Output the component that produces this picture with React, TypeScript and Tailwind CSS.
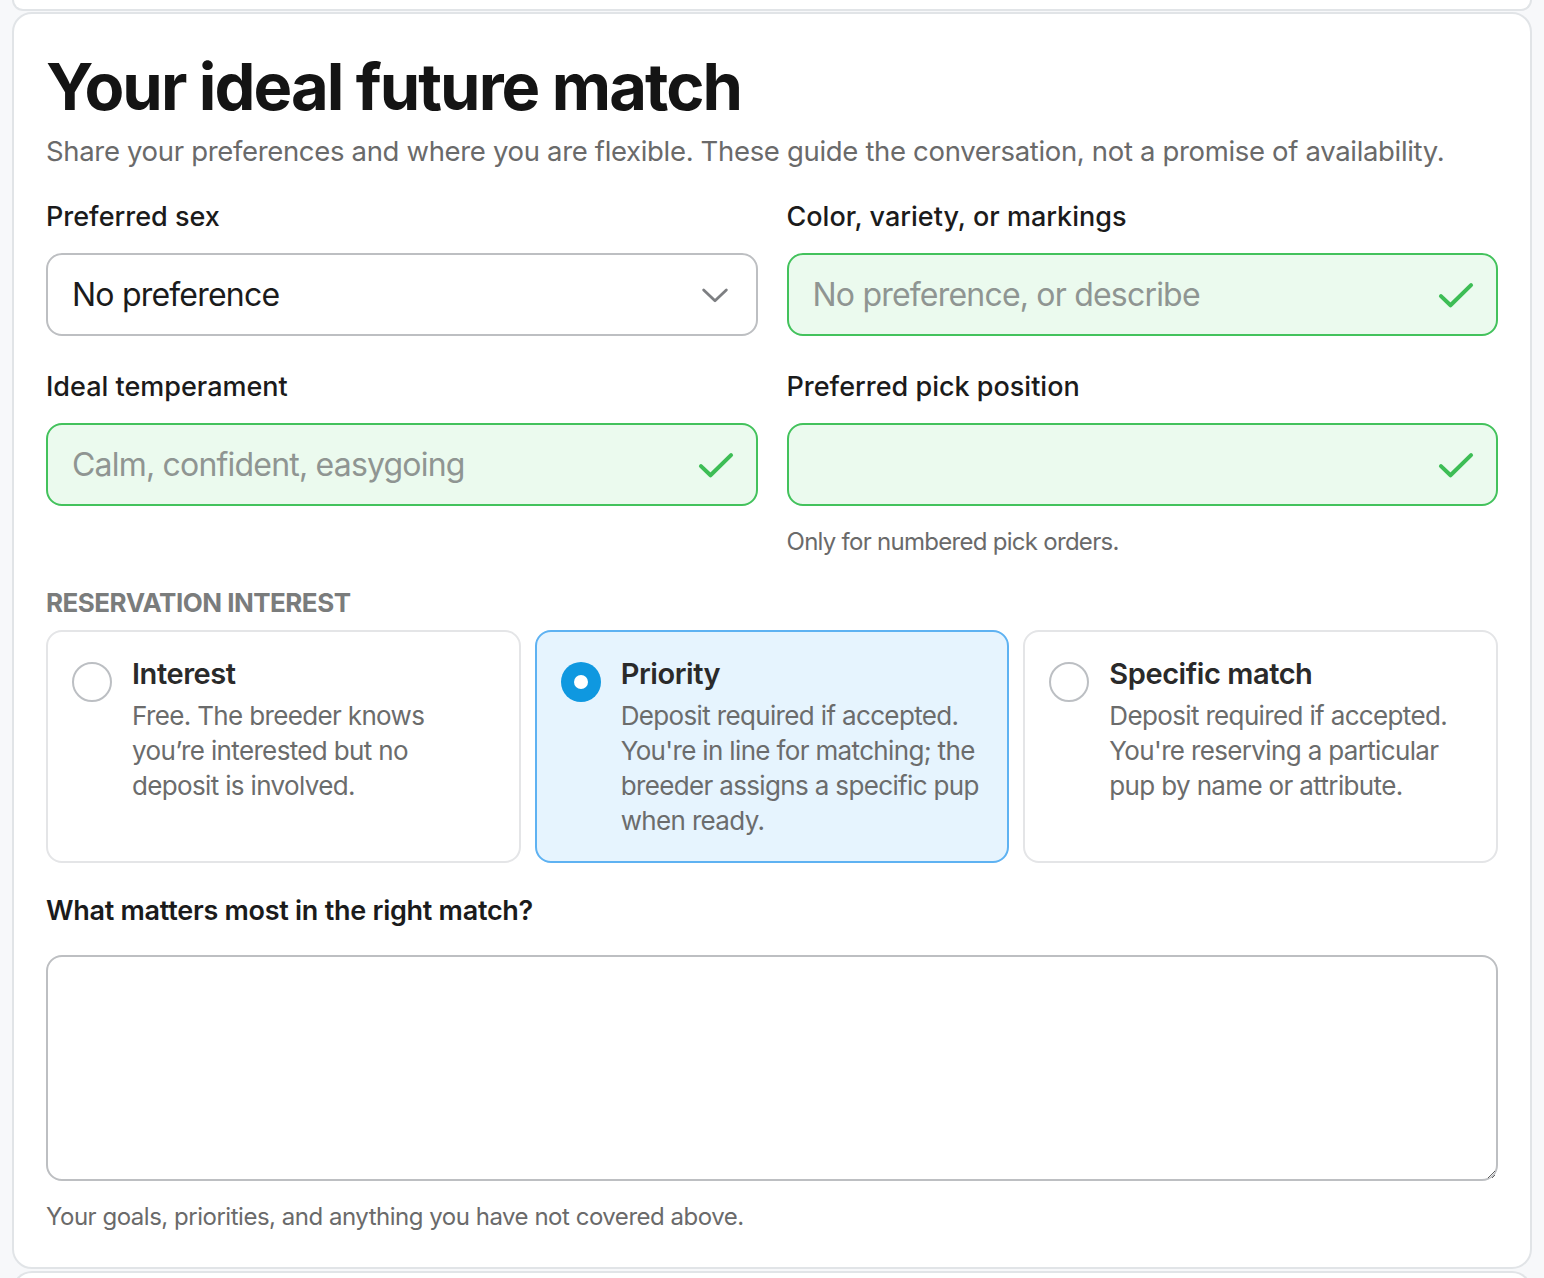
import React from "react";

const font = { fontFamily: "Inter, 'Noto Sans', sans-serif" };

function Check() {
  return (
    <svg width="44" height="44" viewBox="0 0 24 24" fill="none" stroke="#3dbd55" strokeWidth="2.2" strokeLinecap="round" strokeLinejoin="round">
      <path d="M3.8 12.6l5.2 5L20.2 6.6" />
    </svg>
  );
}

function Chevron() {
  return (
    <svg width="34" height="34" viewBox="0 0 24 24" fill="none" stroke="#7d7f82" strokeWidth="2" strokeLinecap="round" strokeLinejoin="round">
      <path d="M4 8.5l8 7.5 8-7.5" />
    </svg>
  );
}

function GreenInput({ placeholder }: { placeholder?: string }) {
  return (
    <div className="flex h-[83px] items-center justify-between rounded-[16px] border-2 border-[#43c25c] bg-[#ebfaee] pl-[24px] pr-[18px]">
      <span className="text-[32px] tracking-[-0.025em] text-[#8f9592]">{placeholder}</span>
      <Check />
    </div>
  );
}

function RadioCard({ title, desc, selected }: { title: string; desc: string; selected?: boolean }) {
  return (
    <div
      className={
        "flex h-[233px] gap-[20px] rounded-[16px] border-2 pl-[24px] pr-[28px] pt-[24px] " +
        (selected ? "border-[#5eb2f2] bg-[#e6f4fe]" : "border-[#e4e5e7] bg-white")
      }
    >
      <div className="shrink-0 pt-[6px]">
        {selected ? (
          <div className="flex h-[40px] w-[40px] items-center justify-center rounded-full bg-[#0f98e0]">
            <div className="h-[14px] w-[14px] rounded-full bg-white" />
          </div>
        ) : (
          <div className="h-[40px] w-[40px] rounded-full border-2 border-[#bcbfc3] bg-white" />
        )}
      </div>
      <div className="min-w-0 flex-1">
        <div className="text-[29px] font-semibold leading-[36px] tracking-[-0.015em] text-[#2a2a2a]">{title}</div>
        <div className="mt-[6px] text-[26px] leading-[35px] tracking-[-0.025em] text-[#6b6c6c]">{desc}</div>
      </div>
    </div>
  );
}

export default function App() {
  return (
    <div className="min-h-[1278px] bg-[#f7f8fa] px-[12px]" style={font}>
      <div className="h-[11px] rounded-b-[20px] border-2 border-t-0 border-[#e1e4e7] bg-white" />
      <div className="mt-[1px] rounded-[20px] border-2 border-[#e1e4e7] bg-white px-[32px] pb-[34px] pt-[38px]">
        <h1 className="text-[65px] font-bold leading-[70px] tracking-[-0.03em] text-[#141414]">
          Your ideal future match
        </h1>
        <p className="mt-[11px] text-[27.5px] leading-[36px] tracking-[-0.012em] text-[#6a6a6a]">
          Share your preferences and where you are flexible. These guide the conversation, not a promise of availability.
        </p>

        <div className="mt-[30px] grid grid-cols-2 gap-x-[29px]">
          <div>
            <div className="text-[27px] font-medium leading-[36px] text-[#1b1b1b]">Preferred sex</div>
            <div className="mt-[18px] flex h-[83px] items-center justify-between rounded-[16px] border-2 border-[#bdbfc2] bg-white pl-[24px] pr-[24px]">
              <span className="text-[32px] tracking-[-0.025em] text-[#1b1b1b]">No preference</span>
              <Chevron />
            </div>
          </div>
          <div>
            <div className="text-[27px] font-medium leading-[36px] text-[#1b1b1b]">Color, variety, or markings</div>
            <div className="mt-[18px]">
              <GreenInput placeholder="No preference, or describe" />
            </div>
          </div>
          <div className="mt-[33px]">
            <div className="text-[27px] font-medium leading-[36px] text-[#1b1b1b]">Ideal temperament</div>
            <div className="mt-[18px]">
              <GreenInput placeholder="Calm, confident, easygoing" />
            </div>
          </div>
          <div className="mt-[33px]">
            <div className="text-[27px] font-medium leading-[36px] text-[#1b1b1b]">Preferred pick position</div>
            <div className="mt-[18px]">
              <GreenInput />
            </div>
            <div className="mt-[20px] text-[24px] leading-[32px] tracking-[-0.03em] text-[#6a6a6a]">Only for numbered pick orders.</div>
          </div>
        </div>

        <div className="mt-[28px] text-[26px] font-bold uppercase leading-[34px] tracking-[-0.02em] text-[#7a7c7c]">
          Reservation interest
        </div>
        <div className="mt-[10px] grid grid-cols-3 gap-[14px]">
          <RadioCard title="Interest" desc="Free. The breeder knows you’re interested but no deposit is involved." />
          <RadioCard
            selected
            title="Priority"
            desc="Deposit required if accepted. You're in line for matching; the breeder assigns a specific pup when ready."
          />
          <RadioCard
            title="Specific match"
            desc="Deposit required if accepted. You're reserving a particular pup by name or attribute."
          />
        </div>

        <div className="mt-[30px] text-[27px] font-semibold leading-[36px] tracking-[-0.01em] text-[#1b1b1b]">
          What matters most in the right match?
        </div>
        <textarea className="mt-[26px] block h-[226px] w-full resize-y rounded-[16px] border-2 border-[#bdbfc2] bg-white outline-none" />
        <div className="mt-[20px] text-[24px] leading-[32px] tracking-[-0.02em] text-[#6a6a6a]">
          Your goals, priorities, and anything you have not covered above.
        </div>
      </div>
      <div className="mt-[2px] h-[20px] rounded-t-[20px] border-2 border-b-0 border-[#e1e4e7] bg-white" />
    </div>
  );
}
